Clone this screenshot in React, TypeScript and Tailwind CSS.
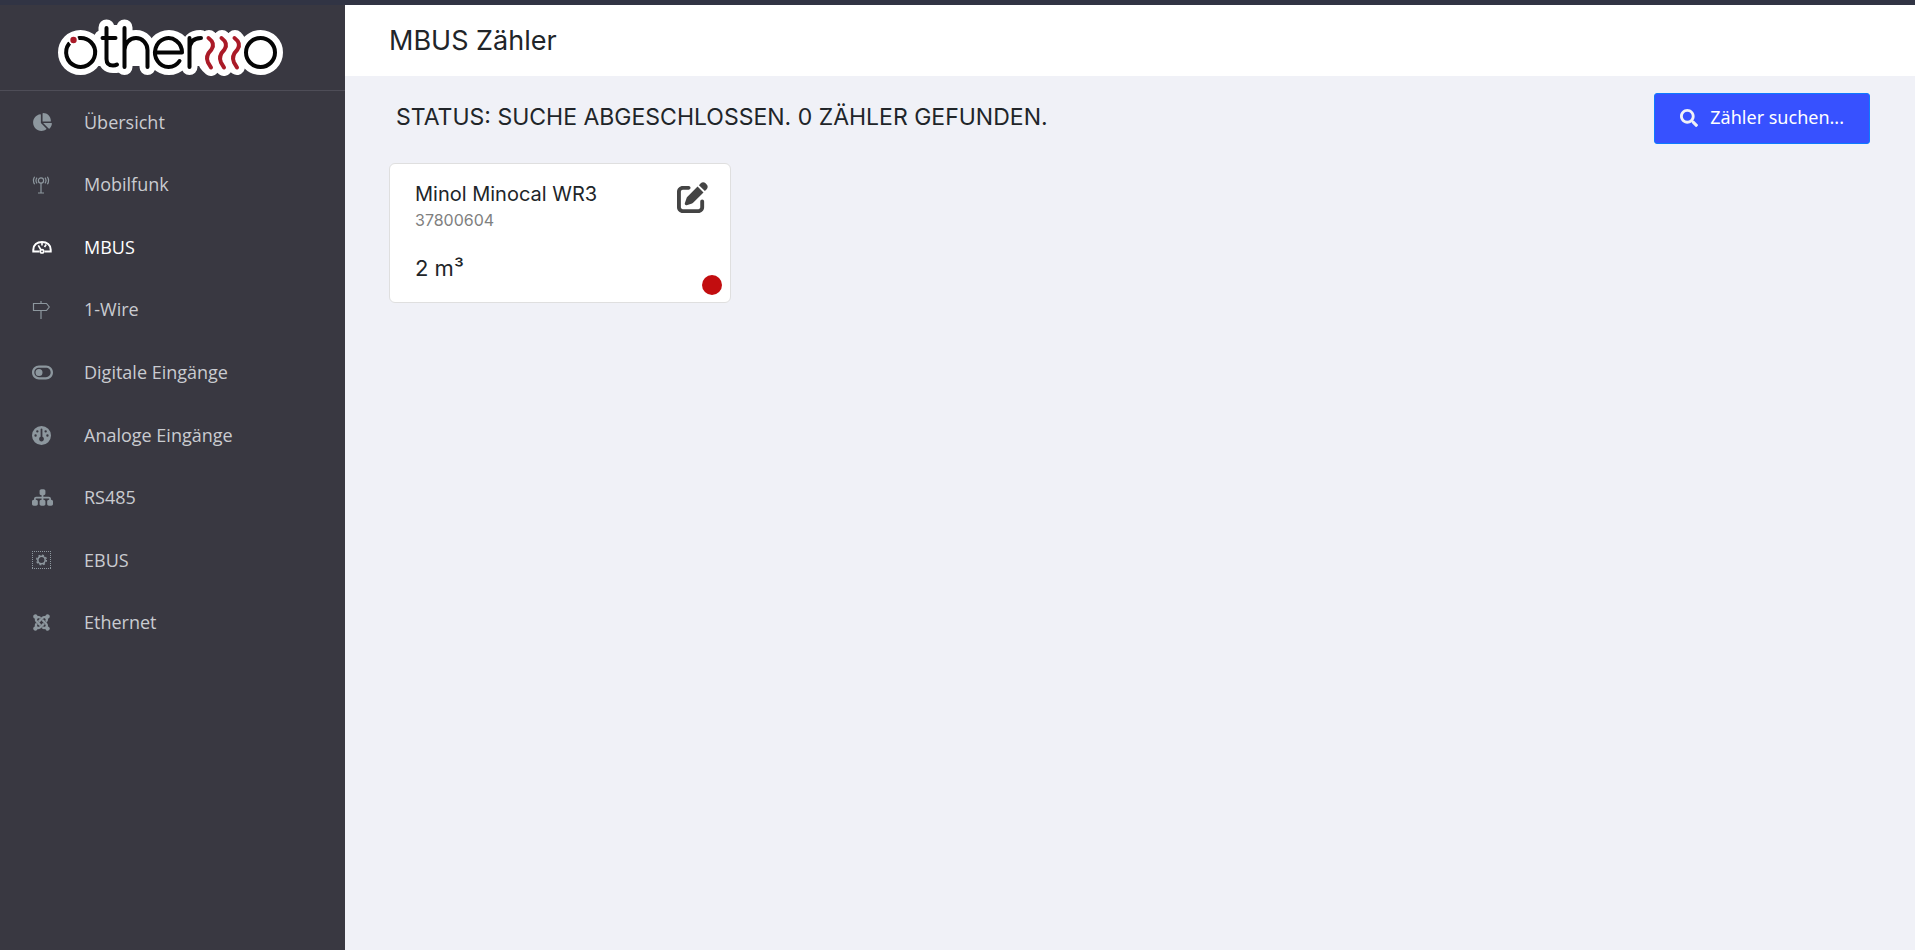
import React from "react";
import {
  FaChartPie,
  FaToggleOff,
  FaGauge,
  FaSitemap,
  FaJoomla,
  FaPenToSquare,
} from "react-icons/fa6";
import { FaSearch } from "react-icons/fa";

function TowerIcon() {
  return (
    <svg width="18" height="18" viewBox="0 0 18 18" fill="none" stroke="currentColor" strokeWidth="1.2" aria-hidden="true">
      <circle cx="9" cy="4.5" r="2.6" />
      <path d="M9 7.1V17M6 17h6M5 1.6a5 5 0 0 0 0 5.8M13 1.6a5 5 0 0 1 0 5.8M2.6.8a7 7 0 0 0 0 7.4M15.4.8a7 7 0 0 1 0 7.4" />
    </svg>
  );
}

function MeterIcon() {
  return (
    <svg width="20" height="18" viewBox="0 0 20 18" fill="none" stroke="currentColor" aria-hidden="true">
      <path d="M7.5 13.5H1.300v-1.800C1.300 7 5 4 10 4s8.700 3 8.700 7.700v1.800h-6.200" strokeWidth="2" />
      <path d="M9 12 6.300 7.300M10 4.500v3M12.500 9l1.700-2.500" strokeWidth="1.600" />
      <circle cx="10" cy="13.300" r="1.700" strokeWidth="1.700" />
    </svg>
  );
}

function SignpostIcon() {
  return (
    <svg width="18" height="18" viewBox="0 0 18 18" fill="none" stroke="currentColor" strokeWidth="1.2" aria-hidden="true">
      <path d="M9 0v2.500M9 9.500V18M1.500 2.500h13L17.300 6l-2.800 3.500h-13z" />
    </svg>
  );
}

function ChipIcon() {
  return (
    <svg width="19" height="18" viewBox="0 0 19 18" fill="none" stroke="currentColor" aria-hidden="true">
      <path d="M0 .5h19M0 17.500h19M.5 0v18M18.500 0v18" strokeDasharray="1 1" />
      <circle cx="9.500" cy="9" r="3.700" strokeWidth="1.500" />
      <circle cx="9.500" cy="9" r="4.900" strokeWidth="1.300" strokeDasharray="1.900 1.950" />
    </svg>
  );
}

function Brand() {
  return (
    <svg width="226" height="58" viewBox="57 18 226 58" fill="none" strokeLinecap="round" strokeLinejoin="round" role="img" aria-label="othermo">
      <path d="M81 40h180v26H81z" fill="#fff" />
      <g stroke="#fff" strokeWidth="16">
        <circle cx="80.500" cy="52.500" r="14.500" fill="#fff" />
        <path d="M106.500 27.500v31q0 6.500 6.500 6.500h3.500M102 38h14M124.500 27.500V67M124.500 50a11.500 12 0 0 1 23 0v17" />
        <path d="M106.500 29h18v36h-18z" strokeWidth="8" fill="#fff" />
        <circle cx="169" cy="52.500" r="14.500" fill="#fff" />
        <path d="M189.500 67V49q0-11 11-11M209 38q8 8 0 15t2 15M222 38q8 8 0 15t2 15M235 38q8 8 0 15t2 14" />
        <circle cx="260.500" cy="52.500" r="14.500" fill="#fff" />
      </g>
      <g stroke="#050505" strokeWidth="4">
        <path d="M79 38A14.500 14.500 0 1 1 69 43.800" />
        <path d="M106.500 28v31q0 6.500 6.500 6.500 2.500 0 4-1M102.500 38h13M124.500 28v39M124.500 50a11.500 12 0 0 1 23 0v17" />
        <path d="M156 52.500h26a13.500 14.500 0 1 0-2.500 8.500M189.500 38v29M189.500 50q0-12 11.500-12" />
        <circle cx="260.500" cy="52.500" r="14.500" />
      </g>
      <g stroke="#aa1a27" strokeWidth="4">
        <path d="M208.500 38c4 3 6 7 3 11.500-4 4-6 8-3.500 13l3 5" />
        <path d="M221.500 38c4 3 6 7 3 11.500-4 4-6 8-3.500 13l3 5" />
        <path d="M234.500 38c4 3 6 7 3 11.500-4 4-6 8-3.500 13l3 5" />
      </g>
      <circle cx="73.500" cy="40" r="5" fill="#fff" />
      <circle cx="73.500" cy="40" r="3.200" fill="#aa1a27" />
    </svg>
  );
}

const items = [
  { label: "Übersicht", icon: <FaChartPie size={20} /> },
  { label: "Mobilfunk", icon: <TowerIcon /> },
  { label: "MBUS", icon: <MeterIcon />, active: true },
  { label: "1-Wire", icon: <SignpostIcon /> },
  { label: "Digitale Eingänge", icon: <FaToggleOff size={21} /> },
  { label: "Analoge Eingänge", icon: <FaGauge size={19} /> },
  { label: "RS485", icon: <FaSitemap size={21} /> },
  { label: "EBUS", icon: <ChipIcon /> },
  { label: "Ethernet", icon: <FaJoomla size={19} /> },
];

export default function App() {
  return (
    <div className="min-h-screen bg-white pr-[5px] font-['Inter',sans-serif] text-[#212529]">
      <div className="flex min-h-screen flex-col">
        <div className="h-[5px] bg-[#313444]" />
        <div className="flex grow">
          <aside className="w-[345px] shrink-0 bg-[#393841]">
            <div className="flex h-[86px] items-start border-b border-[#4e4d57] pt-[13px] pl-[57px]">
              <Brand />
            </div>
            <nav className="grid h-[563px] auto-rows-fr font-['Open_Sans',sans-serif] text-[18px] leading-[27px]">
              {items.map((item) => (
                <a
                  key={item.label}
                  href="#"
                  aria-current={item.active ? "page" : undefined}
                  className={
                    item.active
                      ? "flex items-center pl-8 text-white"
                      : "flex items-center pl-8 text-[#c9cbd0]"
                  }
                >
                  <span className={item.active ? "flex w-[52px] text-white" : "flex w-[52px] text-[#8d979e]"}>
                    {item.icon}
                  </span>
                  {item.label}
                </a>
              ))}
            </nav>
          </aside>
          <main className="min-w-0 grow bg-[#f0f1f7]">
            <header className="flex h-[71px] items-center bg-white pl-11">
              <h1 className="text-[27px] leading-8">MBUS Zähler</h1>
            </header>
            <div className="flex items-start justify-between pt-[17px] pr-[45px] pl-[51px]">
              <h2 className="pt-2 text-[23px] leading-8 uppercase">
                Status: Suche abgeschlossen. 0 Zähler gefunden.
              </h2>
              <button
                type="button"
                className="flex h-[51px] items-center gap-3 rounded-[3px] border border-[#0d7bff] bg-[#3751ff] px-[25px] pb-[2px] font-['Noto_Sans',sans-serif] text-[18px] text-white"
              >
                <FaSearch size={18} className="text-[#f0f1f7]" />
                Zähler suchen...
              </button>
            </div>
            <section className="relative mt-[19px] ml-11 h-[140px] w-[342px] rounded-[6px] border border-[#dfdfdf] bg-white pt-4 pr-[22px] pl-[25px]">
              <div className="flex items-start justify-between">
                <div>
                  <h3 className="text-[20px] leading-7">Minol Minocal WR3</h3>
                  <p className="text-[16px] leading-6 text-[#808080]">37800604</p>
                </div>
                <button type="button" aria-label="Zähler bearbeiten" className="mt-[2px] text-[#444]">
                  <FaPenToSquare size={31} />
                </button>
              </div>
              <p className="mt-5 text-[22px] leading-8">2 m³</p>
              <span className="absolute right-2 bottom-[7px] size-5 rounded-full bg-[#c20d0f]" />
            </section>
          </main>
        </div>
      </div>
    </div>
  );
}
